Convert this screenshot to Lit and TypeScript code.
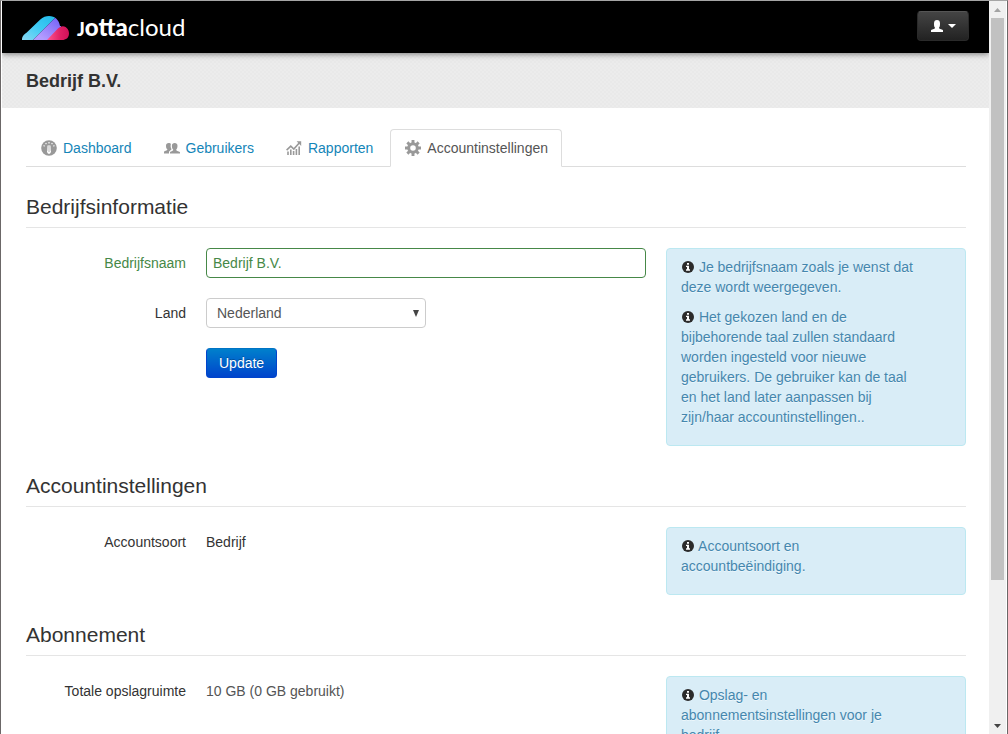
import { LitElement, html, css, svg, TemplateResult } from "lit";
import { customElement, state } from "lit/decorators.js";

const icons: Record<string, TemplateResult> = {
  dashboard: svg`<circle cx="8" cy="8" r="7.8" fill="#999"/>
    <path d="M2.6 5.6l1 .6M4.6 3.2l.8 1M8 2v1.4M11.4 3.2l-.8 1M13.4 5.6l-1 .6" stroke="#fff" stroke-width="1.2"/>
    <path d="M6.500 5.400h3l.2 5.200a2 2 0 1 1-3.400 0z" fill="#fff"/><path d="M8 6v6" stroke="#999" stroke-width=".7"/>`,
  users: svg`<g fill="#999"><path d="M0 13.6V12c0-.9 3.4-1.300 3.400-2.400C2.400 8.700 2 7.400 2 5.800 2 4 3 3 4.700 3c1 0 1.800.4 2.200 1-.5 1.800-.3 3.600.700 5.200-.2.900-2.600 1.400-2.600 2.800v1.600z"/>
    <path d="M6 13.600V12.300c0-.9 3.300-1.200 3.300-2.500C8.200 8.900 7.900 7.600 7.900 5.800 7.900 4 9 3 10.700 3s2.800 1 2.800 2.800c0 1.800-.4 3.100-1.400 4 0 1.300 3.900 1.600 3.900 2.500v1.300z"/></g>`,
  chart: svg`<g fill="none" stroke="#999"><path d="M.6 10.200l4.200-4 3 2.800 5.400-6" stroke-width="1.600"/>
    <path d="M2 15v-3.500M4.800 15V9.500M7.600 15v-4M10.400 15V9M13.200 15V6.500" stroke-width="1.600"/></g><path d="M10.600 1.300h4.600v4.600z" fill="#999"/>`,
  gear: svg`<circle cx="8" cy="8" r="4.300" fill="none" stroke="#999" stroke-width="3"/>
    <path d="M8 0v3M8 13v3M0 8h3M13 8h3M2.350 2.350l2.100 2.100M11.550 11.550l2.100 2.100M2.350 13.650l2.100-2.100M11.550 4.450l2.100-2.100" stroke="#999" stroke-width="2.900"/>`,
};

const tabs = [
  { id: "dashboard", label: "Dashboard" },
  { id: "users", label: "Gebruikers" },
  { id: "chart", label: "Rapporten" },
  { id: "gear", label: "Accountinstellingen" },
];

@customElement("info-note")
class InfoNote extends LitElement {
  static styles = css`
    :host { display: block; padding: 8px 47px 8px 14px; border: 1px solid #bce8f1; border-radius: 4px;
      background: #d9edf7; color: #4587ae; text-shadow: 0 1px 0 rgba(255, 255, 255, 0.5); }
  `;
  render() { return html`<slot></slot>`; }
}

@customElement("app-root")
class AppRoot extends LitElement {
  @state() private active = "gear";

  static styles = css`
    :host { display: flex; height: 100vh; box-sizing: border-box; overflow: hidden; background: #fff;
      border: solid #6b6767; border-width: 1px 1px 0 1px; border-top-color: #a5a5a5; padding: 0 1px;
      font: 14px/20px "Liberation Sans", Arial, sans-serif; color: #333; }
    * { box-sizing: border-box; }
    a { color: #1485b8; text-decoration: none; }
    svg { display: block; flex: none; }
    .page { flex: 1; min-width: 0; overflow: hidden; }
    .navbar { display: flex; align-items: center; justify-content: space-between; height: 52px;
      padding: 0 20px 2px; background: #000; position: relative; box-shadow: 0 1px 6px rgba(0, 0, 0, 0.5); }
    .brand { display: flex; align-items: center; gap: 8px; padding-top: 4px; color: #fff; }
    .word { font-family: Lato, sans-serif; font-size: 24px; line-height: 24px; font-weight: 400; }
    .word b { font-weight: 900; }
    .word .cap { font-size: 18px; }
    .user { display: flex; align-items: center; gap: 4px; height: 30px; padding: 0 12px; border: 1px solid #2a2a2a;
      border-top-color: #555; border-radius: 4px; background: linear-gradient(#444, #222); }
    .banner { height: 55px; padding: 0 24px; display: flex; align-items: center;
      background: repeating-conic-gradient(#ececec 0 25%, #e9e9e9 0 50%) 0 0 / 4px 4px; }
    h1 { margin: 0; font-size: 18px; line-height: 20px; }
    main { padding: 21px 23px 0 24px; }
    .tabs { display: flex; gap: 3px; margin: 0 0 20px; padding: 0; list-style: none; border-bottom: 1px solid #ddd; }
    .tab { display: flex; align-items: center; gap: 6px; margin-bottom: -1px; padding: 8px 13px 8px 14px;
      border: 1px solid transparent; border-radius: 4px 4px 0 0; }
    .tab.on { border-color: #ddd; border-bottom-color: #fff; background: #fff; color: #555; }
    h2 { margin: 0 0 20px; font-size: 21px; line-height: 40px; font-weight: 400; border-bottom: 1px solid #e5e5e5; }
    .cols { display: grid; grid-template-columns: minmax(0, 1fr) 300px; gap: 20px; align-items: start; margin-bottom: 20px; }
    .form { display: grid; grid-template-columns: 160px minmax(0, 1fr); gap: 20px; margin: 0; }
    .label { margin: 0; padding: 5px 0; text-align: right; }
    .value { margin: 0; padding: 5px 0; }
    .soft { color: #555; }
    .ok { color: #468847; }
    .text, .select { height: 30px; font: inherit; border-radius: 4px; background-color: #fff; }
    .text { width: 100%; padding: 4px 6px; border: 1px solid #468847; color: #468847; outline: 0; }
    .select { width: 220px; padding: 4px 10px; border: 1px solid #ccc; color: #555; appearance: none;
      background: #fff url("data:image/svg+xml,%3Csvg xmlns='http://www.w3.org/2000/svg' width='6' height='7'%3E%3Cpath d='M0 0h6L3 7z' fill='%23444'/%3E%3C/svg%3E") no-repeat right 6px center; }
    .update { grid-column: 2; justify-self: start; height: 30px; padding: 0 12px; font: inherit; color: #fff;
      border: 1px solid #04c; border-top-color: #0074c4; border-radius: 4px; background: linear-gradient(#0080cc, #0044cc);
      text-shadow: 0 -1px 0 rgba(0, 0, 0, 0.25); }
    p { margin: 0 0 10px; }
    .info { display: inline-block; vertical-align: -1px; margin: 0 1px; }
    .scroll { width: 17px; flex: none; display: flex; flex-direction: column; align-items: center; background: #f0f0f0; }
    .arrow { height: 17px; width: 17px; display: grid; place-items: center; }
    .thumb { width: 13px; flex: 562; background: #c1c1c1; }
    .rest { flex: 137; }
  `;

  private info() {
    return html`<svg class="info" width="12" height="12" viewBox="0 0 12 12" aria-hidden="true"><circle cx="6" cy="6" r="6" fill="#2b2b2b"/>
      <path d="M5 2h2v1.700H5zM4 4.700h3v3.600h1v1.400H4V8.300h1V6H4z" fill="#fff"/></svg>`;
  }

  private pick(e: Event, id: string) {
    e.preventDefault();
    this.active = id;
  }

  render() {
    return html`
      <div class="page">
        <header class="navbar">
          <a class="brand" href="#" aria-label="Jottacloud">
            <svg width="47" height="24" viewBox="0 0 47 25" preserveAspectRatio="none" aria-hidden="true">
              <defs><clipPath id="cloud"><path d="M0 25C0 20 3 19 5 17L18 4C21 1 24 0 27 0c6 0 10 4 11 10.500C43 10 47 13 47 18s-3 7-7 7z"/></clipPath>
              <linearGradient id="b" x1="0" y1="1" x2="1" y2="0"><stop stop-color="#8ad8f4"/><stop offset=".5" stop-color="#3ecbf5"/><stop offset="1" stop-color="#20b8e8"/></linearGradient>
              <linearGradient id="p" x1="0" y1="1" x2="1" y2="0"><stop offset=".2" stop-color="#b49cff"/><stop offset="1" stop-color="#6d5cf5"/></linearGradient>
              <linearGradient id="r"><stop stop-color="#ff5590"/><stop offset=".6" stop-color="#e02065"/><stop offset="1" stop-color="#d01058"/></linearGradient></defs>
              <g clip-path="url(#cloud)"><path d="M0 0h35L11 25H0z" fill="url(#b)"/><path d="M11 25L33 2l6-2v11L26 25z" fill="url(#p)"/>
              <path d="M25 25l10-11c2-2 4-3 6-3.500L47 9v16z" fill="url(#r)"/></g>
            </svg>
            <span class="word"><b><span class="cap">J</span>otta</b>cloud</span>
          </a>
          <button class="user" aria-label="Account">
            <svg width="14" height="14" viewBox="0 0 14 14"><path d="M1 13v-1.600c0-1 4-1.200 4-2.700C4.200 8 4 7 4 4.600 4 2 5 1 7 1s3 1 3 3.600C10 7 9.800 8 9 8.700c0 1.500 4 1.700 4 2.700V13z" fill="#fff"/></svg>
            <svg width="8" height="4" viewBox="0 0 8 4"><path d="M0 0h8L4 4z" fill="#fff"/></svg>
          </button>
        </header>
        <div class="banner"><h1>Bedrijf B.V.</h1></div>
        <main>
          <nav><ul class="tabs">
            ${tabs.map((t) => html`<li><a href="#" class="tab ${t.id === this.active ? "on" : ""}" @click=${(e: Event) => this.pick(e, t.id)}>
              <svg width="16" height="16" viewBox="0 0 16 16" aria-hidden="true">${icons[t.id]}</svg>${t.label}</a></li>`)}
          </ul></nav>
          <section>
            <h2>Bedrijfsinformatie</h2>
            <div class="cols">
              <form class="form" @submit=${(e: Event) => e.preventDefault()}>
                <label class="label ok" for="name">Bedrijfsnaam</label>
                <input class="text" id="name" type="text" value="Bedrijf B.V.">
                <label class="label" for="country">Land</label>
                <select class="select" id="country"><option>Nederland</option></select>
                <button class="update" type="submit">Update</button>
              </form>
              <info-note>
                <p>${this.info()} Je bedrijfsnaam zoals je wenst dat deze wordt weergegeven.</p>
                <p>${this.info()} Het gekozen land en de bijbehorende taal zullen standaard worden ingesteld voor nieuwe gebruikers. De gebruiker kan de taal en het land later aanpassen bij zijn/haar accountinstellingen..</p>
              </info-note>
            </div>
          </section>
          <section>
            <h2>Accountinstellingen</h2>
            <div class="cols">
              <dl class="form"><dt class="label">Accountsoort</dt><dd class="value">Bedrijf</dd></dl>
              <info-note><p>${this.info()} Accountsoort en accountbeëindiging.</p></info-note>
            </div>
          </section>
          <section>
            <h2>Abonnement</h2>
            <div class="cols">
              <dl class="form"><dt class="label">Totale opslagruimte</dt><dd class="value soft">10 GB (0 GB gebruikt)</dd></dl>
              <info-note><p>${this.info()} Opslag- en abonnementsinstellingen voor je bedrijf.</p></info-note>
            </div>
          </section>
        </main>
      </div>
      <div class="scroll" aria-hidden="true">
        <div class="arrow"><svg width="7" height="4" viewBox="0 0 7 4"><path d="M0 4h7L3.500 0z" fill="#a3a3a3"/></svg></div>
        <div class="thumb"></div><div class="rest"></div>
        <div class="arrow"><svg width="7" height="4" viewBox="0 0 7 4"><path d="M0 0h7L3.500 4z" fill="#444"/></svg></div>
      </div>`;
  }
}
